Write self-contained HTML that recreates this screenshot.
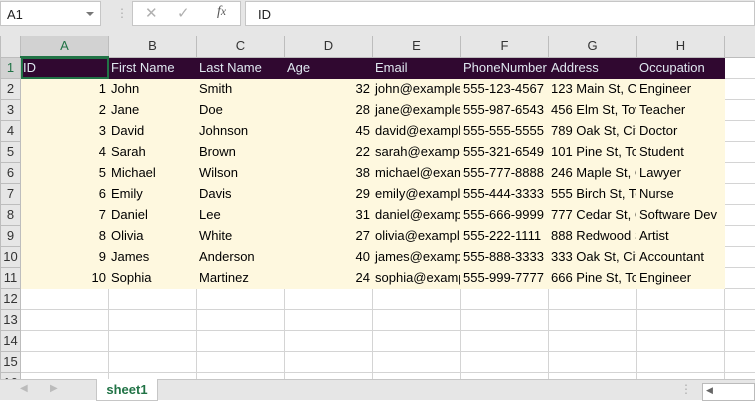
<!DOCTYPE html>
<html><head><style>
*{margin:0;padding:0;box-sizing:border-box}
body{width:755px;height:400px;overflow:hidden;background:#fff;font-family:"Liberation Sans",Arial,sans-serif;position:relative}
.top{position:absolute;left:0;top:0;width:755px;height:36px;background:#e6e6e6}
.nb{position:absolute;left:0;top:1px;width:101px;height:25px;background:#fff;border:1px solid #c6c6c6;font-size:13px;padding:5px 0 0 6px;color:#222}
.nb:after{content:"";position:absolute;right:6px;top:10px;border:4px solid transparent;border-top:4px solid #777}
.fx{position:absolute;left:132px;top:1px;width:109px;height:25px;background:#fff;border:1px solid #c6c6c6;color:#b0b0b0;font-size:15px}
.fb{position:absolute;left:245px;top:1px;width:510px;height:25px;background:#fff;border:1px solid #c6c6c6;font-size:13px;padding:5px 0 0 12px;color:#222}
table{position:absolute;left:0;top:36px;border-collapse:collapse;table-layout:fixed;width:784px}
td{height:21px;border:1px solid #d4d4d4;font-size:13px;white-space:nowrap;overflow:hidden;padding:0 2px;color:#000;line-height:20px;max-width:88px}
td.ch{background:#e6e6e6;text-align:center;color:#333;height:20px;border-color:#bdbdbd;border-top:none}
td.rh{background:#e6e6e6;text-align:center;color:#333;border-color:#bdbdbd;padding:0}
tr.h td.c{background:#300830;color:#dfe8f0;border-color:#300830}
td.d{background:#fef8df;border-color:#fef8df}
.r{text-align:right}
.tabs{position:absolute;left:0;top:379px;width:755px;height:21px;background:#e6e6e6;border-top:1px solid #c6c6c6}
.sh{position:absolute;left:96px;top:-1px;width:62px;height:22px;background:#fff;border:1px solid #c6c6c6;border-top:none;color:#217346;font-weight:bold;font-size:13px;text-align:center;line-height:22px}
</style></head><body>
<div class="top">
<div class="nb">A1</div>
<div style="position:absolute;left:116px;top:6px;color:#aaa;font-size:12px">⋮</div>
<div class="fx"><span style="position:absolute;left:12px;top:2px">✕</span><span style="position:absolute;left:44px;top:2px">✓</span><span style="position:absolute;left:84px;top:2px;color:#555;font-style:italic;font-family:'Liberation Serif',serif;font-size:14px">f<small>x</small></span></div>
<div class="fb">ID</div>
</div>
<table>
<colgroup><col style="width:20px"><col style="width:88px"><col style="width:88px"><col style="width:88px"><col style="width:88px"><col style="width:88px"><col style="width:88px"><col style="width:88px"><col style="width:88px"><col style="width:60px"></colgroup>
<tr><td class="ch" style="background:#e6e6e6"></td><td class="ch" style="background:#d2d2d2;color:#217346;border-bottom:2px solid #217346">A</td><td class="ch">B</td><td class="ch">C</td><td class="ch">D</td><td class="ch">E</td><td class="ch">F</td><td class="ch">G</td><td class="ch">H</td><td class="ch"></td></tr>
<tr class="h"><td class="rh" style="color:#217346;background:#d2d2d2">1</td><td class="c" style="outline:2px solid #217346;outline-offset:-2px">ID</td><td class="c">First Name</td><td class="c">Last Name</td><td class="c">Age</td><td class="c">Email</td><td class="c">PhoneNumber</td><td class="c">Address</td><td class="c">Occupation</td><td></td></tr>
<tr><td class="rh">2</td><td class="d r">1</td><td class="d">John</td><td class="d">Smith</td><td class="d r">32</td><td class="d">john@example.com</td><td class="d">555-123-4567</td><td class="d">123 Main St, City</td><td class="d">Engineer</td><td></td></tr>
<tr><td class="rh">3</td><td class="d r">2</td><td class="d">Jane</td><td class="d">Doe</td><td class="d r">28</td><td class="d">jane@example.com</td><td class="d">555-987-6543</td><td class="d">456 Elm St, Town</td><td class="d">Teacher</td><td></td></tr>
<tr><td class="rh">4</td><td class="d r">3</td><td class="d">David</td><td class="d">Johnson</td><td class="d r">45</td><td class="d">david@example.com</td><td class="d">555-555-5555</td><td class="d">789 Oak St, City</td><td class="d">Doctor</td><td></td></tr>
<tr><td class="rh">5</td><td class="d r">4</td><td class="d">Sarah</td><td class="d">Brown</td><td class="d r">22</td><td class="d">sarah@example.com</td><td class="d">555-321-6549</td><td class="d">101 Pine St, Town</td><td class="d">Student</td><td></td></tr>
<tr><td class="rh">6</td><td class="d r">5</td><td class="d">Michael</td><td class="d">Wilson</td><td class="d r">38</td><td class="d">michael@example.com</td><td class="d">555-777-8888</td><td class="d">246 Maple St, City</td><td class="d">Lawyer</td><td></td></tr>
<tr><td class="rh">7</td><td class="d r">6</td><td class="d">Emily</td><td class="d">Davis</td><td class="d r">29</td><td class="d">emily@example.com</td><td class="d">555-444-3333</td><td class="d">555 Birch St, Town</td><td class="d">Nurse</td><td></td></tr>
<tr><td class="rh">8</td><td class="d r">7</td><td class="d">Daniel</td><td class="d">Lee</td><td class="d r">31</td><td class="d">daniel@example.com</td><td class="d">555-666-9999</td><td class="d">777 Cedar St, City</td><td class="d" style="overflow:visible">Software Dev</td><td></td></tr>
<tr><td class="rh">9</td><td class="d r">8</td><td class="d">Olivia</td><td class="d">White</td><td class="d r">27</td><td class="d">olivia@example.com</td><td class="d">555-222-1111</td><td class="d">888 Redwood St</td><td class="d">Artist</td><td></td></tr>
<tr><td class="rh">10</td><td class="d r">9</td><td class="d">James</td><td class="d">Anderson</td><td class="d r">40</td><td class="d">james@example.com</td><td class="d">555-888-3333</td><td class="d">333 Oak St, City</td><td class="d">Accountant</td><td></td></tr>
<tr><td class="rh">11</td><td class="d r">10</td><td class="d">Sophia</td><td class="d">Martinez</td><td class="d r">24</td><td class="d">sophia@example.com</td><td class="d">555-999-7777</td><td class="d">666 Pine St, Town</td><td class="d">Engineer</td><td></td></tr>
<tr><td class="rh">12</td><td></td><td></td><td></td><td></td><td></td><td></td><td></td><td></td><td></td></tr>
<tr><td class="rh">13</td><td></td><td></td><td></td><td></td><td></td><td></td><td></td><td></td><td></td></tr>
<tr><td class="rh">14</td><td></td><td></td><td></td><td></td><td></td><td></td><td></td><td></td><td></td></tr>
<tr><td class="rh">15</td><td></td><td></td><td></td><td></td><td></td><td></td><td></td><td></td><td></td></tr>
<tr><td class="rh">16</td><td></td><td></td><td></td><td></td><td></td><td></td><td></td><td></td><td></td></tr>
</table>
<div class="tabs">
<span style="position:absolute;left:20px;top:3px;color:#bbb;font-size:10px">◀</span>
<span style="position:absolute;left:50px;top:3px;color:#bbb;font-size:10px">▶</span>
<div class="sh">sheet1</div>
<span style="position:absolute;left:680px;top:2px;color:#aaa;font-size:12px">⋮</span>
<div style="position:absolute;left:702px;top:3px;width:53px;height:18px;background:#fff;border:1px solid #bbb"><span style="position:absolute;left:3px;top:1px;font-size:9px;color:#666">◀</span></div>
</div>
</body></html>
